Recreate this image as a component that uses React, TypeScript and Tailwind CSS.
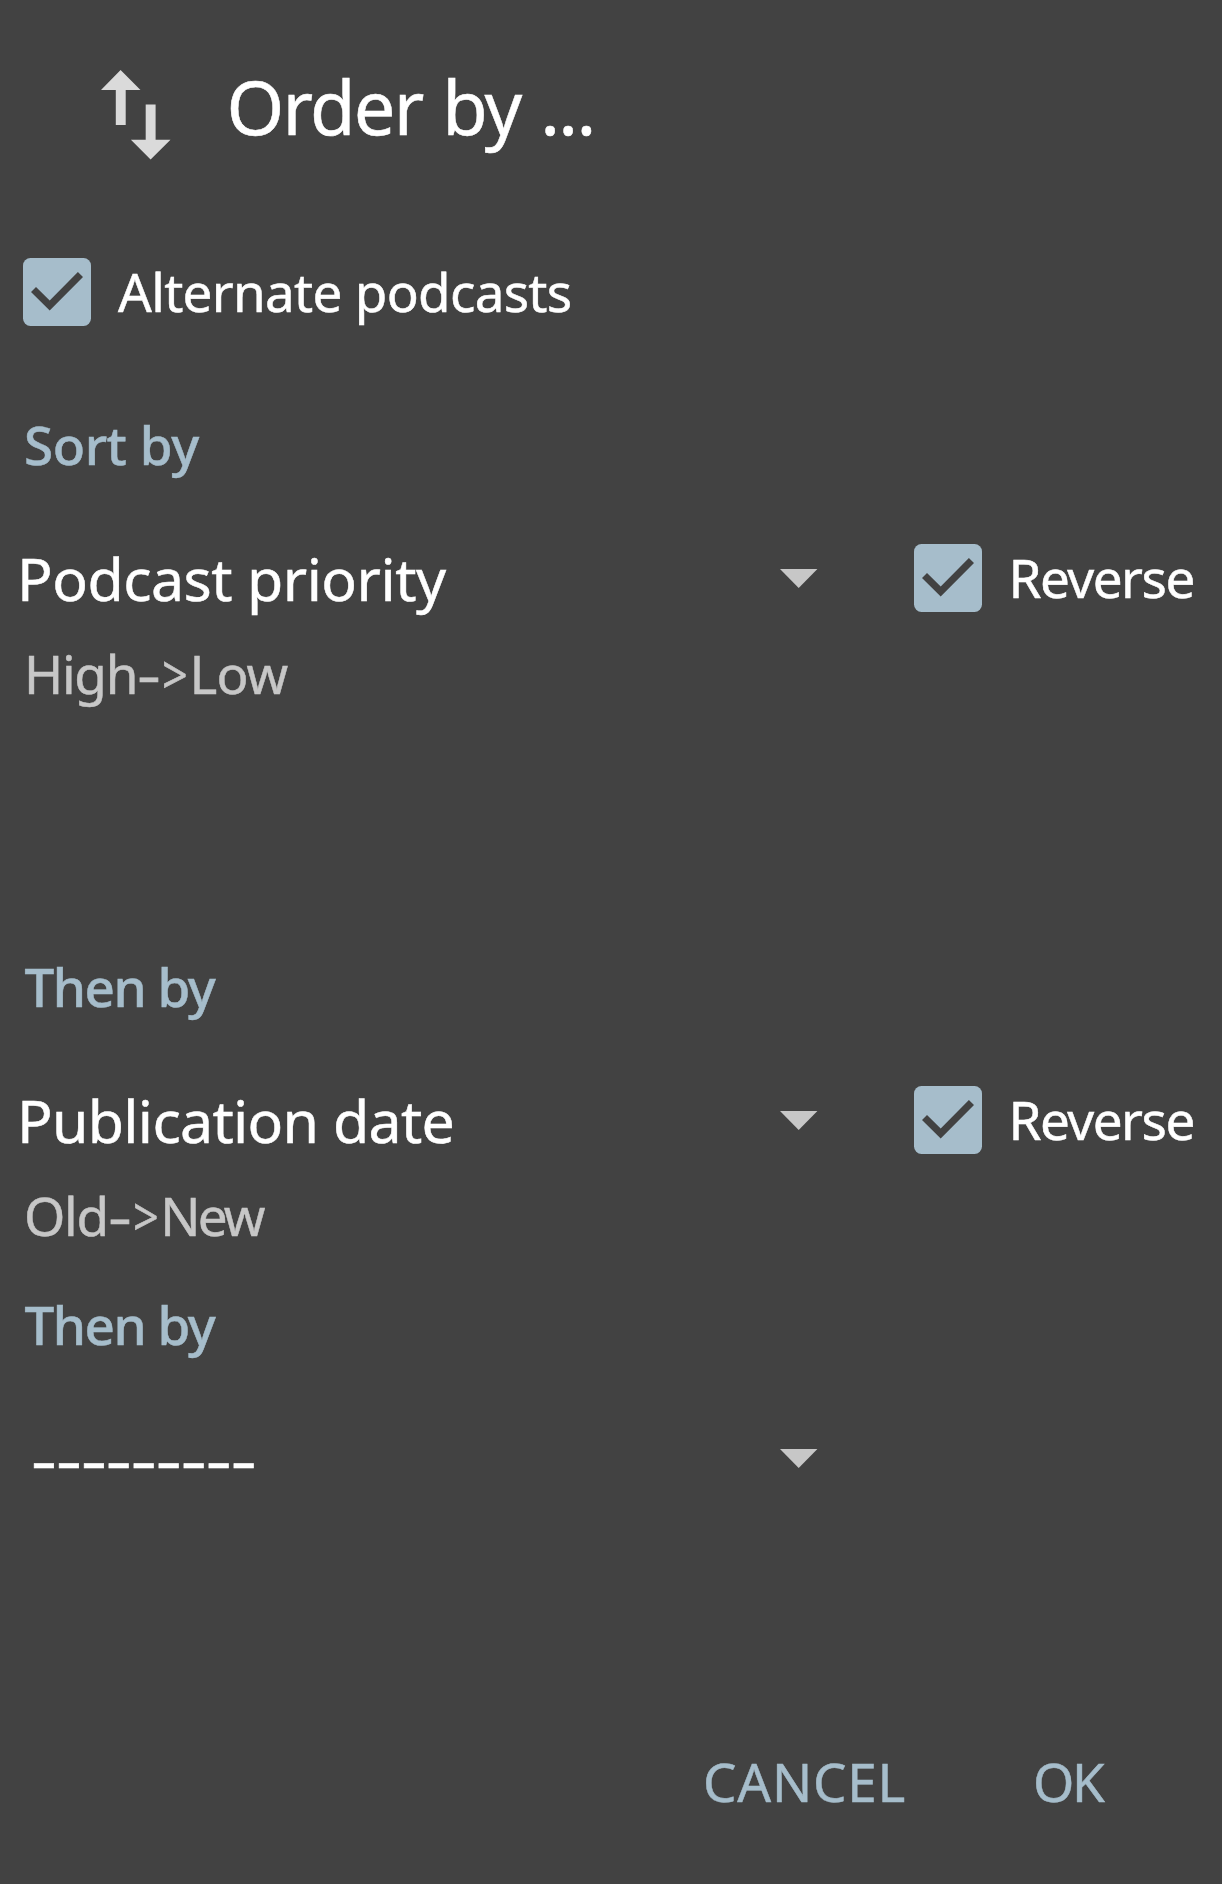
import { useState } from "react";

function SwapIcon() {
  return (
    <svg width="70" height="90" viewBox="0 0 70 90" className="shrink-0" fill="#dadada" aria-hidden="true">
      <path d="M19.6 0L0 19.9h14.8V55h9.9V19.9h14.8z" />
      <path d="M44.7 34.6h9.9v35.1h14.9L49.6 89.6 29.9 69.7h14.8z" />
    </svg>
  );
}

function Caret() {
  return (
    <svg width="38" height="19" viewBox="0 0 38 19" className="mt-px shrink-0" fill="#c7c7c7" aria-hidden="true">
      <path d="M0 0h37.4L18.7 19z" />
    </svg>
  );
}

function Checkbox({ label, className }: { label: string; className: string }) {
  const [checked, setChecked] = useState(true);
  return (
    <button type="button" role="checkbox" aria-checked={checked} onClick={() => setChecked(!checked)} className="flex items-center">
      <svg width="68" height="68" viewBox="0 0 68 68" className="shrink-0" aria-hidden="true">
        <rect width="68" height="68" rx="7.5" fill="#a6bdcb" />
        {checked && <path d="M8 34l5-5 13.7 13.5L54.9 14l5.1 5-33.3 33.6z" fill="#424242" />}
      </svg>
      <span className={className}>{label}</span>
    </button>
  );
}

function Heading({ text, className }: { text: string; className: string }) {
  return <h2 className={`flex h-20 items-center font-medium text-[#a6bdcb] ${className}`}>{text}</h2>;
}

function Direction({ from, to, className }: { from: string; to: string; className: string }) {
  return (
    <div className="mt-[15px] flex h-20 items-center pl-6 text-[#c7c7c7]">
      <span className="tracking-[-1.3px]">{from}</span>
      <span className="origin-left scale-x-[1.4]">-</span>
      <span className="ml-2 origin-left scale-x-[0.85]">&gt;</span>
      <span className={`-ml-[3px] ${className}`}>{to}</span>
    </div>
  );
}

function SortRow({ value, className }: { value: string; className: string }) {
  return (
    <div className="mt-[54px] flex h-20 items-center">
      <div className="flex w-[914px] items-center pl-[17px]">
        <span className={`w-[763px] text-[59px] ${className}`}>{value}</span>
        <Caret />
      </div>
      <Checkbox label="Reverse" className="-mt-px ml-[26.5px] tracking-[-1.5px]" />
    </div>
  );
}

export default function App() {
  return (
    <main className="flex h-[1884px] w-[1222px] flex-col overflow-hidden bg-[#424242] font-['Noto_Sans',sans-serif] text-[53px] leading-none whitespace-nowrap text-white [-webkit-text-stroke:0.5px_currentColor]">
      <header className="flex h-[211px] items-center pl-[101px]">
        <div className="mt-[18px]">
          <SwapIcon />
        </div>
        <h1 className="mt-[3px] ml-[55.5px] text-[74px] tracking-[-1.7px] [word-spacing:2px]">Order by ...</h1>
      </header>

      <div className="mt-[41px] flex h-20 items-center pl-[23px]">
        <Checkbox label="Alternate podcasts" className="-mt-px ml-[27px] tracking-[-0.7px]" />
      </div>

      <Heading text="Sort by" className="mt-[72px] pl-6 tracking-[-0.45px]" />
      <SortRow value="Podcast priority" className="tracking-[-0.5px]" />
      <Direction from="High" to="Low" className="tracking-[-0.9px]" />

      <Heading text="Then by" className="mt-[233px] pl-[24.5px] tracking-[-1.5px]" />
      <SortRow value="Publication date" className="tracking-[-0.7px]" />
      <Direction from="Old" to="New" className="tracking-[-2.8px]" />

      <Heading text="Then by" className="mt-[29px] pl-[24.5px] tracking-[-1.5px]" />
      <div className="mt-[54px] flex h-20 items-center pl-[30.5px]">
        <span className="w-[749.5px] text-[59px] tracking-[-0.65px]">
          <span className="inline-block origin-left scale-x-[1.36]">---------</span>
        </span>
        <Caret />
      </div>

      <footer className="mt-[243px] flex h-20 items-center pl-[703px] text-[#a6bdcb]">
        <button type="button" className="w-[330px] text-left tracking-[0.8px]">CANCEL</button>
        <button type="button" className="tracking-[-2.5px]">OK</button>
      </footer>
    </main>
  );
}
